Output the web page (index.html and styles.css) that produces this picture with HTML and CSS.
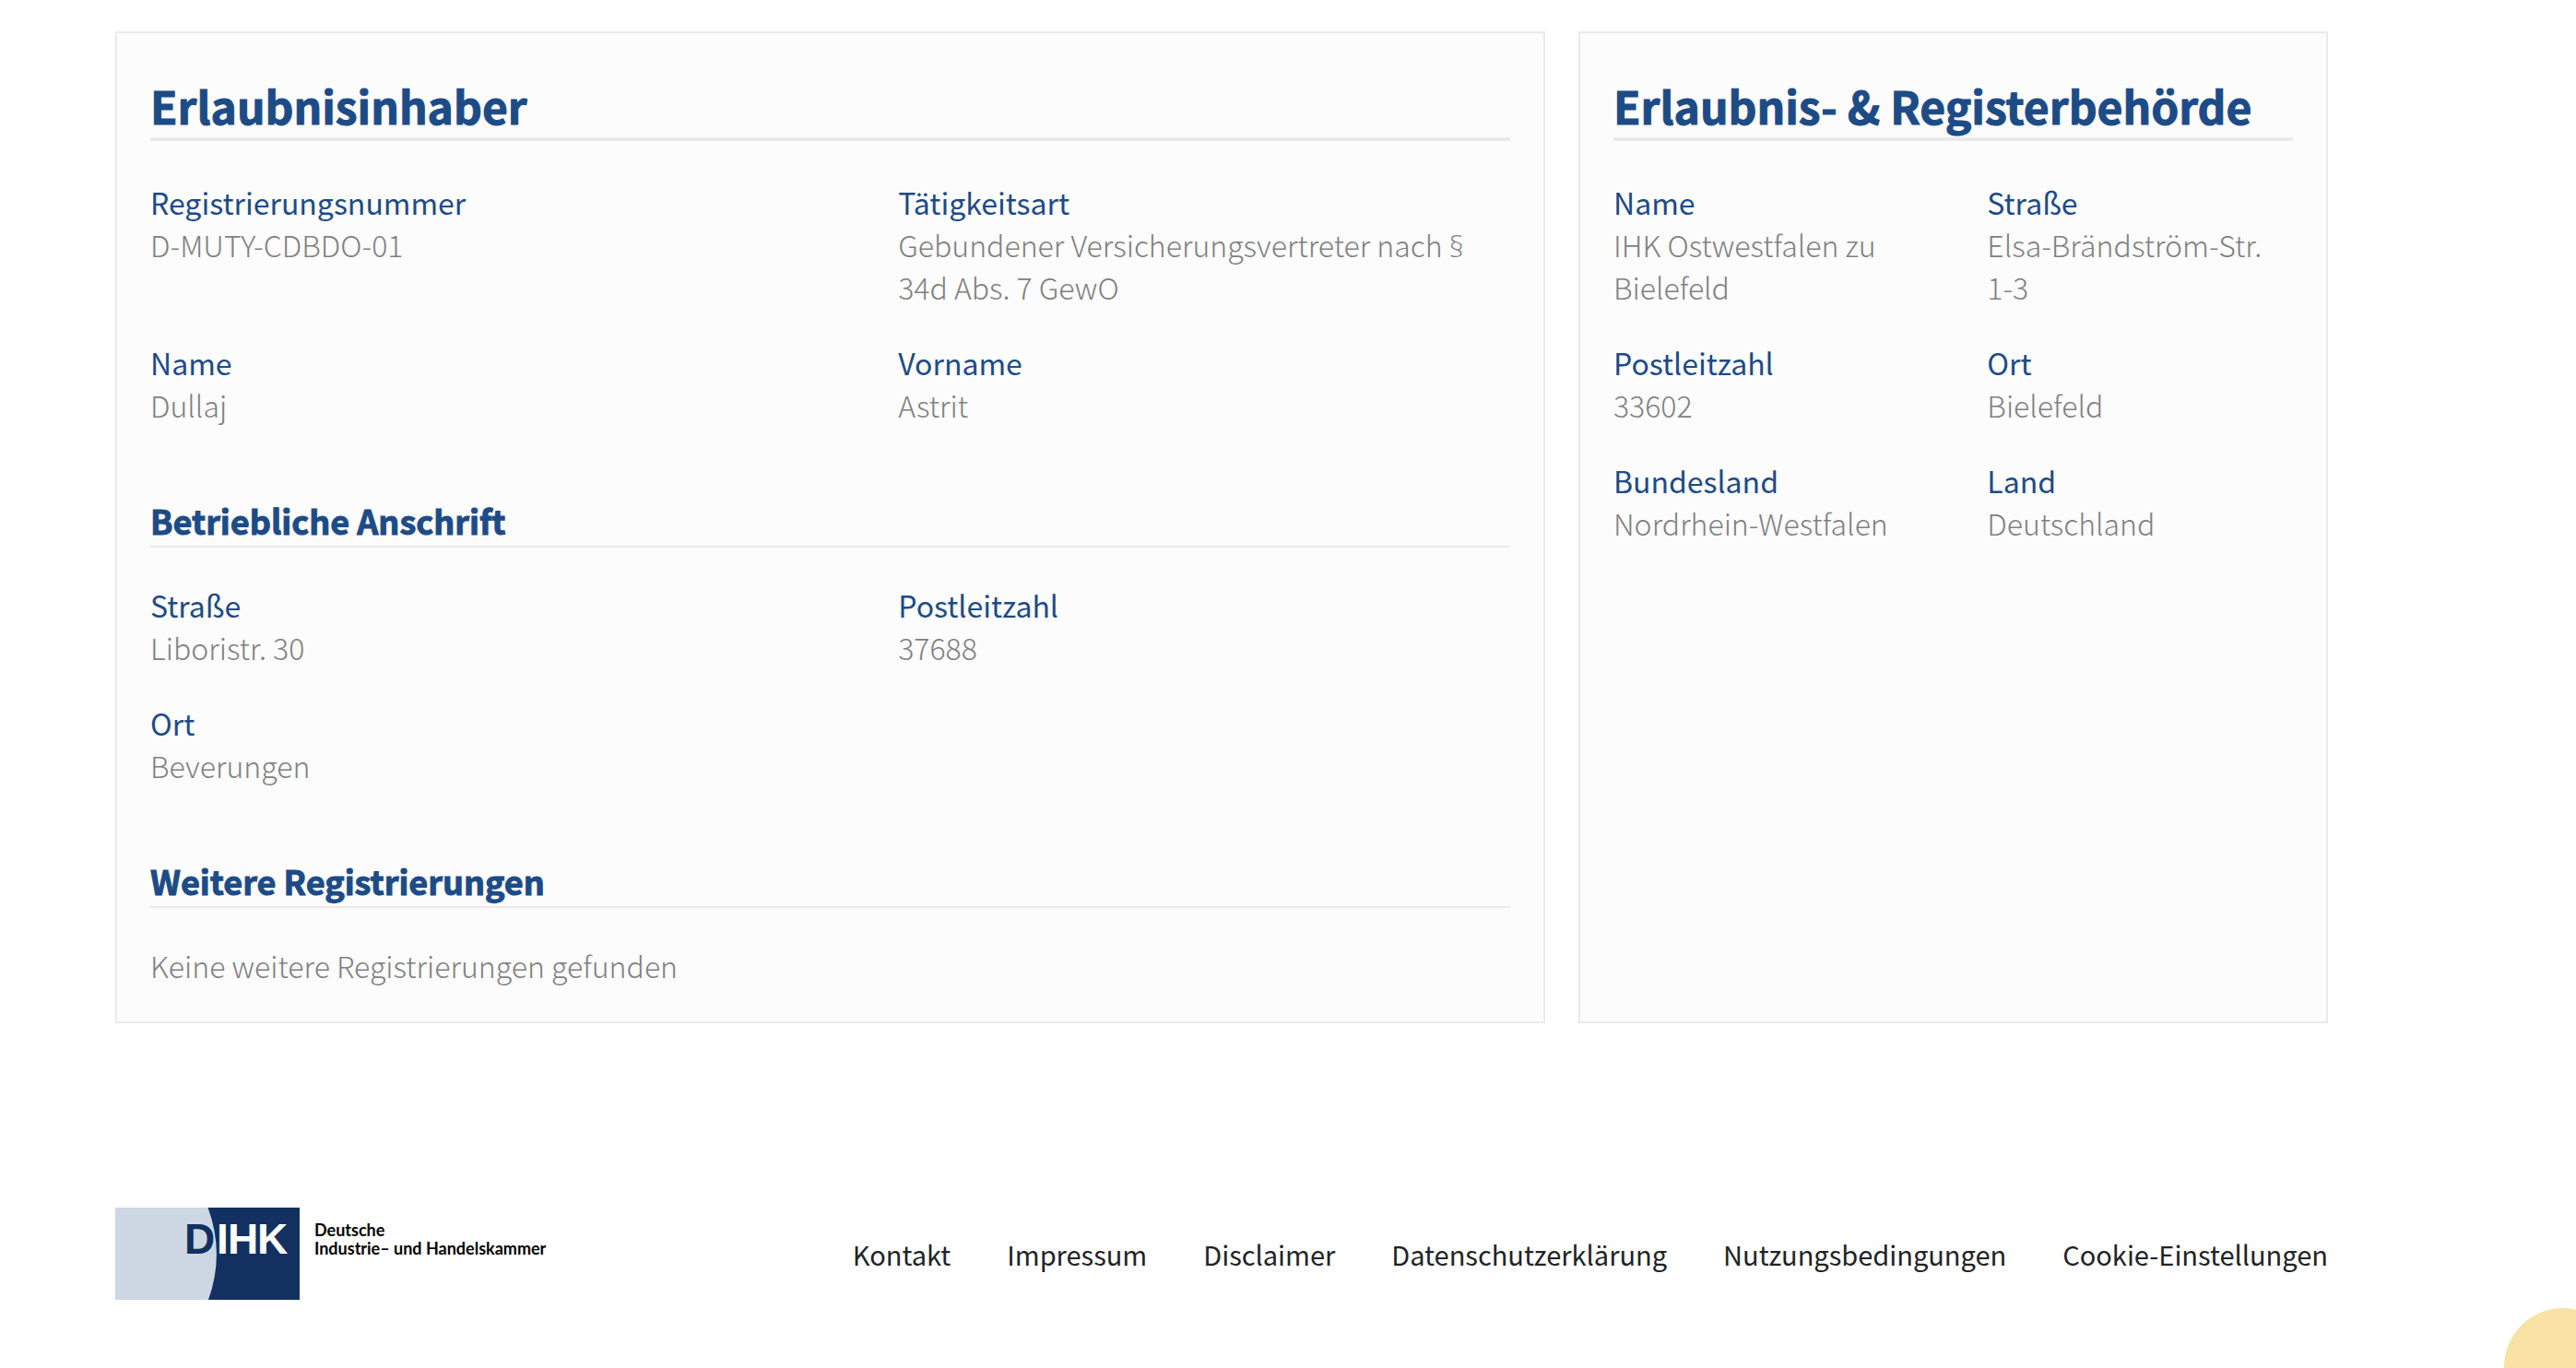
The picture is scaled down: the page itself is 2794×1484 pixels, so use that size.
FILE: index.html
```html
<!DOCTYPE html>
<html lang="de">
<head>
  <meta charset="utf-8">
  <meta name="viewport" content="width=device-width, initial-scale=1">
  <title>Vermittlerregister</title>
  <link rel="stylesheet" href="styles.css">
</head>
<body>
  <div class="page">
    <main class="cards">
      <section class="card">
        <h2 class="card-title">Erlaubnisinhaber</h2>
        <dl class="fields">
          <div class="field"><dt>Registrierungsnummer</dt><dd>D-MUTY-CDBDO-01</dd></div>
          <div class="field"><dt>Tätigkeitsart</dt><dd>Gebundener Versicherungsvertreter nach <span class="sign">§</span> 34d Abs. 7 GewO</dd></div>
          <div class="field"><dt>Name</dt><dd>Dullaj</dd></div>
          <div class="field"><dt>Vorname</dt><dd>Astrit</dd></div>
        </dl>
        <h3 class="card-subtitle">Betriebliche Anschrift</h3>
        <dl class="fields">
          <div class="field"><dt>Straße</dt><dd>Liboristr. 30</dd></div>
          <div class="field"><dt>Postleitzahl</dt><dd>37688</dd></div>
          <div class="field"><dt>Ort</dt><dd>Beverungen</dd></div>
        </dl>
        <h3 class="card-subtitle">Weitere Registrierungen</h3>
        <p class="note">Keine weitere Registrierungen gefunden</p>
      </section>

      <section class="card">
        <h2 class="card-title">Erlaubnis- &amp; Registerbehörde</h2>
        <dl class="fields">
          <div class="field"><dt>Name</dt><dd>IHK Ostwestfalen zu Bielefeld</dd></div>
          <div class="field"><dt>Straße</dt><dd>Elsa-Brändström-Str. 1-3</dd></div>
          <div class="field"><dt>Postleitzahl</dt><dd>33602</dd></div>
          <div class="field"><dt>Ort</dt><dd>Bielefeld</dd></div>
          <div class="field"><dt>Bundesland</dt><dd>Nordrhein-Westfalen</dd></div>
          <div class="field"><dt>Land</dt><dd>Deutschland</dd></div>
        </dl>
      </section>
    </main>

    <footer class="footer">
      <a class="brand" href="#">
        <svg class="brand-mark" viewBox="0 0 200 100" role="img" aria-label="DIHK">
          <rect width="200" height="100" fill="#123160"/>
          <path d="M0 0H100.500Q119 50 101 100H0Z" fill="#cdd7e3"/>
          <text class="brand-letters" y="50"><tspan x="75" fill="#123160">D</tspan><tspan x="110" fill="#fff">I</tspan><tspan x="122" fill="#fff">H</tspan><tspan x="154" fill="#fff">K</tspan></text>
        </svg>
        <span class="brand-name">Deutsche<br>Industrie– und Handelskammer</span>
      </a>
      <nav class="links" aria-label="Fußzeile">
        <a href="#">Kontakt</a>
        <a href="#">Impressum</a>
        <a href="#">Disclaimer</a>
        <a href="#">Datenschutzerklärung</a>
        <a href="#">Nutzungsbedingungen</a>
        <a href="#">Cookie-Einstellungen</a>
      </nav>
    </footer>
  </div>
  <div class="corner-bubble" aria-hidden="true"></div>
</body>
</html>
```
FILE: styles.css
```css
:root {
  --blue: #1d4b86;
  --line: #eaeaea;
}

* {
  box-sizing: border-box;
}

body {
  margin: 0;
  background: #fff;
  color: #212326;
  font-family: "Source Sans Pro", "Noto Sans CJK SC", "Noto Sans", sans-serif;
  font-size: 32px;
  line-height: 46px;
}

.page {
  padding: 34px 269px 73px 125px;
}

.cards {
  display: grid;
  grid-template-columns: 1551fr 813fr;
  gap: 36px;
}

.card {
  padding: 36px 36px 38px;
  border: 2px solid var(--line);
  background: #fcfcfc;
}

.card-title {
  margin: 10px 0 43px;
  padding-bottom: 3px;
  border-bottom: 4px solid var(--line);
  color: var(--blue);
  font-size: 48px;
  font-weight: 700;
  line-height: 64px;
  -webkit-text-stroke: 1px currentColor;
}

.card-subtitle {
  margin: 78px 0 39px;
  padding-bottom: 4px;
  border-bottom: 2px solid var(--line);
  color: var(--blue);
  font-size: 36px;
  font-weight: 700;
  line-height: 48px;
  -webkit-text-stroke: 1px currentColor;
}

.fields {
  display: grid;
  grid-template-columns: 55% 45%;
  row-gap: 36px;
  margin: 0;
}

.field dt {
  color: var(--blue);
  font-weight: 400;
}

.field dd,
.note {
  margin: 0;
  color: #808080;
  font-weight: 300;
}

/* The CJK face draws this sign at full width */
.sign {
  font-family: "Open Sans", "Noto Sans", sans-serif;
  line-height: 1;
}

.footer {
  display: flex;
  align-items: center;
  justify-content: space-between;
  margin-top: 200px;
}

.brand {
  display: flex;
  gap: 16px;
  color: #000;
  text-decoration: none;
}

.brand-mark {
  width: 200px;
  height: 100px;
}

.brand-letters {
  font-family: "Liberation Sans", Arial, sans-serif;
  font-size: 46px;
  font-weight: 700;
}

.brand-name {
  padding-top: 14px;
  font-family: Lato, sans-serif;
  font-size: 18px;
  font-weight: 700;
  line-height: 20px;
}

.links {
  display: flex;
  gap: 61px;
}

.links a {
  color: inherit;
  font-size: 29px;
  line-height: 44px;
  text-decoration: none;
}

.corner-bubble {
  position: fixed;
  right: -50px;
  bottom: -63px;
  width: 128px;
  height: 128px;
  border-radius: 50%;
  background: #f8e3a5;
}
```
